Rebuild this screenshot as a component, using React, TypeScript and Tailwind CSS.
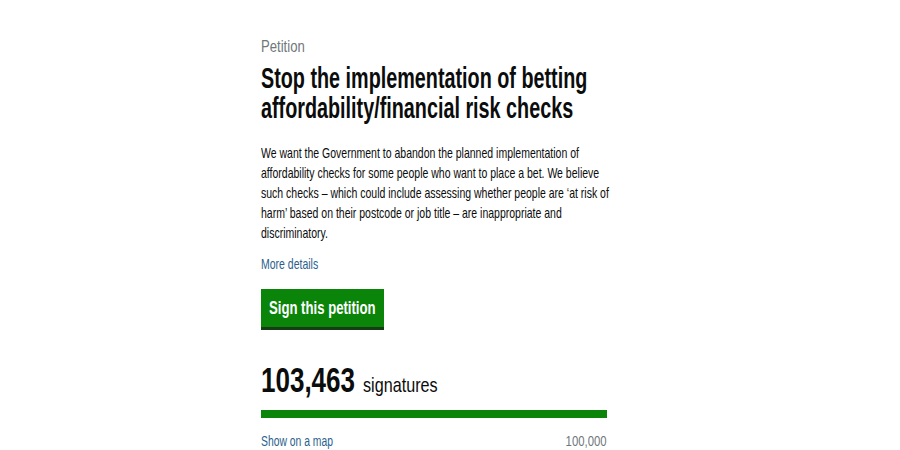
import React from "react";

export default function App() {
  return (
    <div
      className="w-[900px] h-[450px] bg-white overflow-hidden"
      style={{ fontFamily: '"Liberation Sans", Arial, sans-serif' }}
    >
      <div className="ml-[261px] w-[346px] pt-[37px] flex flex-col">
        <div className="text-[16px] leading-[20px] text-[#6f777b] whitespace-nowrap origin-left scale-x-[0.82]">
          Petition
        </div>
        <h1 className="mt-[6px] text-[29px] leading-[30px] font-bold text-[#0b0c0c] whitespace-nowrap origin-left scale-x-[0.682]">
          Stop the implementation of betting
          <br />
          affordability/financial risk checks
        </h1>
        <p className="mt-[20px] text-[15px] leading-[20px] text-[#0b0c0c] whitespace-nowrap origin-left scale-x-[0.70]">
          We want the Government to abandon the planned implementation of
          <br />
          affordability checks for some people who want to place a bet. We believe
          <br />
          such checks – which could include assessing whether people are ‘at risk of
          <br />
          harm’ based on their postcode or job title – are inappropriate and
          <br />
          discriminatory.
        </p>
        <div className="mt-[11px] text-[15px] leading-[20px] text-[#2b5f8e] whitespace-nowrap origin-left scale-x-[0.70]">
          More details
        </div>
        <div className="mt-[15px] w-[123px] h-[38px] bg-[#0a850a] shadow-[0_3px_0_#173a17] flex items-center pl-[8px]">
          <span className="text-[18px] leading-[22px] font-bold text-white whitespace-nowrap origin-left scale-x-[0.73]">
            Sign this petition
          </span>
        </div>
        <div className="mt-[35px] flex items-baseline text-[#0b0c0c]">
          <span className="w-[94px] text-[35px] leading-[36px] font-bold whitespace-nowrap">
            <span className="inline-block origin-left scale-x-[0.743]">103,463</span>
          </span>
          <span className="ml-[8px] text-[21px] leading-[24px] whitespace-nowrap">
            <span className="inline-block origin-left scale-x-[0.77]">signatures</span>
          </span>
        </div>
        <div className="mt-[12px] h-[8px] bg-[#0a850a]" />
        <div className="mt-[13px] flex justify-between text-[14px] leading-[20px] whitespace-nowrap">
          <span className="inline-block text-[#2b5f8e] origin-left scale-x-[0.74]">Show on a map</span>
          <span className="inline-block text-[#6f777b] origin-right scale-x-[0.81]">100,000</span>
        </div>
      </div>
    </div>
  );
}
